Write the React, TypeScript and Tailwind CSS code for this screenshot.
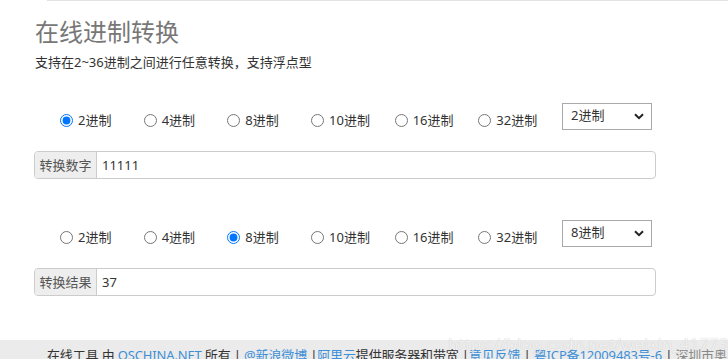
import React from "react";

const font = { fontFamily: '"Noto Sans", "Noto Sans CJK SC", sans-serif' };

const bases = ["2进制", "4进制", "8进制", "10进制", "16进制", "32进制"];

function Chevron() {
  return (
    <svg width="10" height="7" viewBox="0 0 10 7" className="text-[#222]">
      <path d="M1 1.2 L5 5.2 L9 1.2" fill="none" stroke="currentColor" strokeWidth="2" />
    </svg>
  );
}

function RadioRow({ name, checked, selectText }: { name: string; checked: number; selectText: string }) {
  return (
    <div className="flex items-start h-[27px]">
      <div className="flex ml-[25px] mt-[8px] w-[502px]">
        {bases.map((b, i) => (
          <label key={b} className="flex items-center w-[84px] h-[18px] text-[13px] leading-[18px] text-[#333]">
            <input
              type="radio"
              name={name}
              defaultChecked={i === checked}
              className="w-[13px] h-[13px] accent-[#0075ff] shrink-0"
            />
            <span className="ml-[5px]">{b}</span>
          </label>
        ))}
      </div>
      <div className="w-[90px] h-[27px] border border-[#a9a9a9] flex items-center justify-between pl-[8px] pr-[7px] text-[13px] text-[#333]">
        <span className="leading-[18px] -mt-[3px]">{selectText}</span>
        <Chevron />
      </div>
    </div>
  );
}

function InputGroup({ label, value }: { label: string; value: string }) {
  return (
    <div className="flex -ml-[1px] w-[622px] h-[28px] border border-[#ccc] rounded-[4px] overflow-hidden text-[13px]">
      <div className="w-[62px] bg-[#eee] border-r border-[#ccc] flex items-center justify-center text-[#555] leading-[18px]">
        {label}
      </div>
      <div className="flex-1 flex items-center pl-[5px] text-[#333] leading-[18px]">{value}</div>
    </div>
  );
}

export default function App() {
  return (
    <div className="relative w-[728px] h-[359px] overflow-hidden bg-white" style={font}>
      <div className="h-px ml-[47px] bg-[#e3e3e3]" />
      <div className="px-[35px]">
        <h1 className="mt-[18px] text-[24px] leading-[26px] text-[#777] font-normal">在线进制转换</h1>
        <p className="mt-[8px] text-[13px] leading-[18px] text-[#333]">支持在2~36进制之间进行任意转换，支持浮点型</p>
        <div className="mt-[32px]">
          <RadioRow name="from" checked={0} selectText="2进制" />
        </div>
        <div className="mt-[21px]">
          <InputGroup label="转换数字" value="11111" />
        </div>
        <div className="mt-[41px]">
          <RadioRow name="to" checked={2} selectText="8进制" />
        </div>
        <div className="mt-[21px]">
          <InputGroup label="转换结果" value="37" />
        </div>
      </div>
      <div className="absolute left-0 right-0 top-[340px] bottom-0 bg-[#ebebeb]">
        <div className="pl-[47px] pt-[6px] text-[13px] leading-[18px] tracking-[-0.15px] text-[#333] whitespace-nowrap">
          在线工具 由 <span className="text-[#3d8fd8]">OSCHINA.NET</span> 所有 |{" "}
          <span className="text-[#3d8fd8]">@新浪微博</span> |<span className="text-[#3d8fd8]">阿里云</span>提供服务器和带宽 |
          <span className="text-[#3d8fd8]">意见反馈</span> | <span className="text-[#3d8fd8]">粤ICP备12009483号-6</span> |{" "}
          <span className="text-[#888]">深圳市奥思网络科技有限公司版权所有</span>
        </div>
      </div>
      <div className="absolute left-[448px] top-[333px] text-[17px] leading-[22px] text-[rgba(255,255,255,0.75)] [text-shadow:0_0_1px_rgba(0,0,0,0.2)] whitespace-nowrap">
        https://blog.csdn.net/weixin_41773514
      </div>
    </div>
  );
}
